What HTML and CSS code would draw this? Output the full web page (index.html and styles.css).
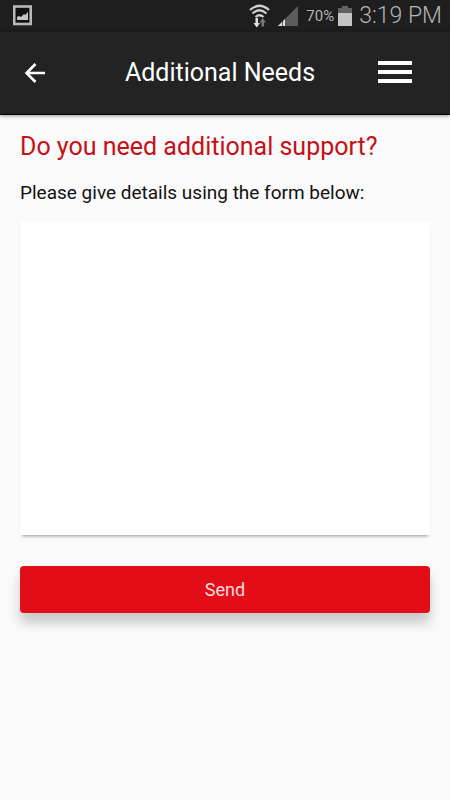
FILE: index.html
```html
<!DOCTYPE html>
<html lang="en">
<head>
<meta charset="utf-8">
<meta name="viewport" content="width=device-width, initial-scale=1">
<title>Additional Needs</title>
<link rel="stylesheet" href="styles.css">
</head>
<body>
<div class="status">
  <svg class="status-picture" width="20" height="22" viewBox="0 0 20 22" aria-hidden="true">
    <rect x="1.2" y="1.500" width="16.500" height="17.500" fill="#111" stroke="#b9b9b9" stroke-width="2.600"/>
    <path d="M4 15v-3l2-1 2 1 3-3 1 1 3-3v8z" fill="#c4c4c4"/>
  </svg>
  <div class="status-right">
    <svg width="21" height="24" viewBox="0 0 21 24" aria-hidden="true">
      <g fill="none" stroke="#d0d0d0" stroke-width="2.200">
        <path d="M1 6Q10.500-2.500 20 6"/>
        <path d="M3.500 9.500q7-6.500 14 0"/>
        <path d="M6.500 13q4-3.500 8 0"/>
      </g>
      <path d="M6.500 14h2.500v5h2l-3.200 4.500L4.500 19h2z" fill="#e0e0e0"/>
      <path d="M12.500 22.500v-4h-2l3.200-4.500 3.300 4.500h-2v4z" fill="#777"/>
    </svg>
    <svg class="signal" width="21" height="21" viewBox="0 0 21 21" aria-hidden="true">
      <path d="M20 0v20H0z" fill="#5c5c5c"/>
      <path d="M0 20l4-4v4zM5 15l2-2v7H5z" fill="#dedede"/>
    </svg>
    <span class="percent">70%</span>
    <svg class="battery" width="14" height="20" viewBox="0 0 14 20" aria-hidden="true">
      <path d="M4 0h6v2h4v6H0V2h4z" fill="#626262"/>
      <path d="M0 7h14v13H0z" fill="#c4c4c4"/>
    </svg>
    <span class="clock">3:19 PM</span>
  </div>
</div>
<header class="bar">
  <button class="icon-button" type="button" aria-label="Back">
    <svg width="22" height="22" viewBox="0 0 22 22" aria-hidden="true">
      <path d="M21 11H3M11.500 2L2.500 11l9 9" fill="none" stroke="#fff" stroke-width="2.600"/>
    </svg>
  </button>
  <h1 class="title">Additional Needs</h1>
  <button class="icon-button" type="button" aria-label="Menu">
    <svg width="34" height="24" viewBox="0 0 34 24" aria-hidden="true">
      <path d="M0 0h34v4H0zM0 9h34v4H0zM0 18h34v4H0z" fill="#fff"/>
    </svg>
  </button>
</header>
<main class="content">
  <h2 class="heading">Do you need additional support?</h2>
  <form class="form">
    <label class="label" for="details">Please give details using the form below:</label>
    <textarea class="details" id="details"></textarea>
    <button class="send" type="submit">Send</button>
  </form>
</main>
</body>
</html>
```
FILE: styles.css
```css
* {
  box-sizing: border-box;
}

body {
  margin: 0;
  min-height: 100vh;
  background: #fafafa;
  color: #111;
  font-family: Roboto, "Liberation Sans", sans-serif;
}

svg {
  display: block;
}

.status {
  display: flex;
  align-items: center;
  justify-content: space-between;
  height: 32px;
  padding: 0 8px 0 13px;
  background: #1e1e1e;
  color: #b4b4b4;
}

.status-right {
  display: flex;
  align-items: center;
}

.signal {
  margin: 0 7px 0 8px;
}

.percent {
  font-size: 15px;
}

.battery {
  margin: 0 7px 0 4px;
}

.clock {
  font-size: 23px;
  font-weight: 300;
  line-height: 30px;
}

.bar {
  display: grid;
  grid-template-columns: 54px 1fr 34px;
  align-items: center;
  height: 83px;
  padding: 0 38px 0 8px;
  background: #232323;
  border-bottom: 1px solid #000;
  box-shadow: 0 1px 4px rgba(0, 0, 0, 0.4);
  color: #fff;
}

.icon-button {
  display: flex;
  justify-content: center;
  padding: 8px 0;
  border: 0;
  background: none;
}

.title {
  margin: 0;
  font-size: 25px;
  font-weight: 400;
  line-height: 32px;
  text-align: center;
}

.content {
  padding: 16px 20px;
}

.heading {
  margin: 0 0 16px;
  color: #c61016;
  font-size: 25px;
  font-weight: 400;
  line-height: 32px;
}

.form {
  display: flex;
  flex-direction: column;
}

.label {
  margin-bottom: 16px;
  font-size: 19px;
  line-height: 27px;
}

.details {
  height: 313px;
  margin-bottom: 31px;
  padding: 12px;
  border: 0;
  background: #fff;
  box-shadow: 0 3px 3px -2px rgba(0, 0, 0, 0.4);
  font: inherit;
  font-size: 19px;
  resize: none;
}

.send {
  height: 47px;
  border: 0;
  border-radius: 4px;
  background: #e20d17;
  box-shadow: 0 10px 12px rgba(0, 0, 0, 0.2);
  color: #fbdcdd;
  font: inherit;
  font-size: 18px;
}
```
